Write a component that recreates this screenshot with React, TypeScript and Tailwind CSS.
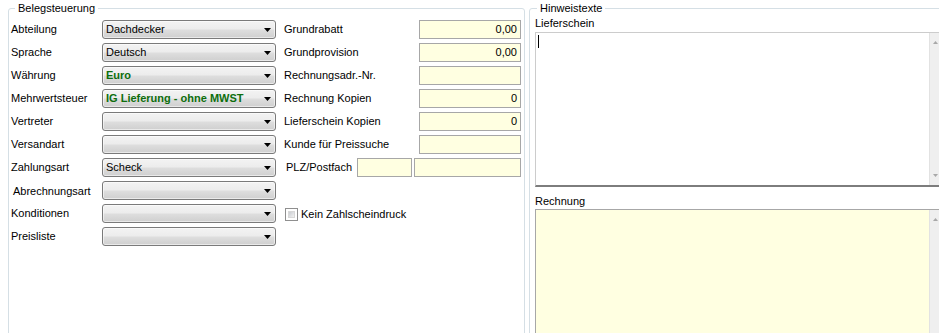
import React from 'react'

const FONT = { fontFamily: '"Liberation Sans", Arial, sans-serif' }

const LEFT = [
  { label: 'Abteilung', value: 'Dachdecker' },
  { label: 'Sprache', value: 'Deutsch' },
  { label: 'Währung', value: 'Euro', green: true },
  { label: 'Mehrwertsteuer', value: 'IG Lieferung - ohne MWST', green: true },
  { label: 'Vertreter' },
  { label: 'Versandart' },
  { label: 'Zahlungsart', value: 'Scheck' },
  { label: 'Abrechnungsart', shift: true },
  { label: 'Konditionen' },
  { label: 'Preisliste' },
]

const MIDDLE = [
  { label: 'Grundrabatt', value: '0,00' },
  { label: 'Grundprovision', value: '0,00' },
  { label: 'Rechnungsadr.-Nr.', value: '' },
  { label: 'Rechnung Kopien', value: '0' },
  { label: 'Lieferschein Kopien', value: '0' },
  { label: 'Kunde für Preissuche', value: '' },
]

function Combo({ value, green }: { value?: string; green?: boolean }) {
  return (
    <div className="w-[174px] h-[19px] shrink-0 rounded-[3px] border border-[#7a7a7a] bg-[linear-gradient(to_bottom,#f3f3f3_0%,#ececec_48%,#dedede_52%,#cfcfcf_100%)] shadow-[inset_0_0_0_1px_rgba(255,255,255,0.55)] flex items-center pl-[3px] pr-[4px]">
      <span className={`leading-[17px] whitespace-nowrap ${green ? 'font-bold text-[#0d6e0d]' : 'text-black'}`}>
        {value}
      </span>
      <svg className="ml-auto mt-[1px]" width="7" height="4" viewBox="0 0 7 4">
        <path d="M0 0H7L3.5 4Z" fill="#000" />
      </svg>
    </div>
  )
}

function Field({ value, w = 'w-[102px]' }: { value?: string; w?: string }) {
  return (
    <div className={`${w} h-[19px] shrink-0 border border-[#a7a7a7] bg-[#ffffe1] text-right pr-[3px] leading-[17px] text-black`}>
      {value}
    </div>
  )
}

function ScrollBar() {
  return (
    <div className="w-[17px] shrink-0 bg-[#efefef] border-l border-[#e2e2e2] flex flex-col items-center justify-between py-[8px]">
      <svg width="5" height="3" viewBox="0 0 5 3" className="ml-[-6px]">
        <path d="M0 3H5L2.5 0Z" fill="#a8a8a8" />
      </svg>
      <svg width="5" height="3" viewBox="0 0 5 3" className="ml-[-6px]">
        <path d="M0 0H5L2.5 3Z" fill="#a8a8a8" />
      </svg>
    </div>
  )
}

export default function App() {
  return (
    <div className="w-[939px] h-[333px] overflow-hidden bg-white flex pt-[1px] text-[11px] text-black" style={FONT}>
      {/* Belegsteuerung */}
      <fieldset className="ml-[8px] w-[517px] h-[360px] shrink-0 border border-[#d5dfe5] rounded-[3px]">
        <legend className="ml-[6px] px-[3px] leading-[14px]">Belegsteuerung</legend>
        <div className="pt-[5px] pl-[2px] flex flex-col gap-[4px]">
          {LEFT.map((row, i) => (
            <div key={row.label} className="flex items-center h-[19px]">
              <div className={`w-[91px] shrink-0 whitespace-nowrap ${row.shift ? 'pl-[2px] mt-[2px]' : ''}`}>{row.label}</div>
              <Combo value={row.value} green={row.green} />
              <div className="ml-[8px] flex items-center">
                {i < 6 && (
                  <>
                    <div className="w-[135px] whitespace-nowrap">{MIDDLE[i].label}</div>
                    <Field value={MIDDLE[i].value} />
                  </>
                )}
                {i === 6 && (
                  <>
                    <div className="w-[73px] pl-[2px] whitespace-nowrap">PLZ/Postfach</div>
                    <Field w="w-[55px]" />
                    <div className="ml-[2px]">
                      <Field w="w-[107px]" />
                    </div>
                  </>
                )}
                {i === 8 && (
                  <div className="flex items-center mt-[2px]">
                    <div className="ml-[1px] w-[13px] h-[13px] border border-[#8f8f8f] bg-white p-[2px]">
                      <div className="w-full h-full bg-[linear-gradient(135deg,#c9ccd1,#f2f2f2)] border border-[#d8d8d8]" />
                    </div>
                    <span className="ml-[3px]">Kein Zahlscheindruck</span>
                  </div>
                )}
              </div>
            </div>
          ))}
        </div>
      </fieldset>

      {/* Hinweistexte */}
      <fieldset className="ml-[4px] w-[430px] h-[360px] shrink-0 border border-[#d5dfe5] rounded-[3px]">
        <legend className="ml-[7px] px-[3px] leading-[14px]">Hinweistexte</legend>
        <div className="pl-[5px] flex flex-col">
          <div className="mt-[2px] leading-[13px]">Lieferschein</div>
          <div className="mt-[2px] w-[412px] h-[155px] border border-[#cccccc] border-b-2 border-b-[#7d7d7d] bg-white flex">
            <div className="flex-1">
              <div className="ml-[2px] mt-[2px] w-[1px] h-[13px] bg-black" />
            </div>
            <ScrollBar />
          </div>
          <div className="mt-[8px] leading-[13px]">Rechnung</div>
          <div className="mt-[1px] w-[412px] h-[140px] border border-[#a7a7a7] bg-[#ffffe1] flex">
            <div className="flex-1" />
            <div className="w-[17px] shrink-0 bg-[#efefef] border-l border-[#e2e2e2] flex flex-col items-center pt-[8px]">
              <svg width="5" height="3" viewBox="0 0 5 3" className="ml-[-6px]">
                <path d="M0 3H5L2.5 0Z" fill="#a8a8a8" />
              </svg>
            </div>
          </div>
        </div>
      </fieldset>
    </div>
  )
}
